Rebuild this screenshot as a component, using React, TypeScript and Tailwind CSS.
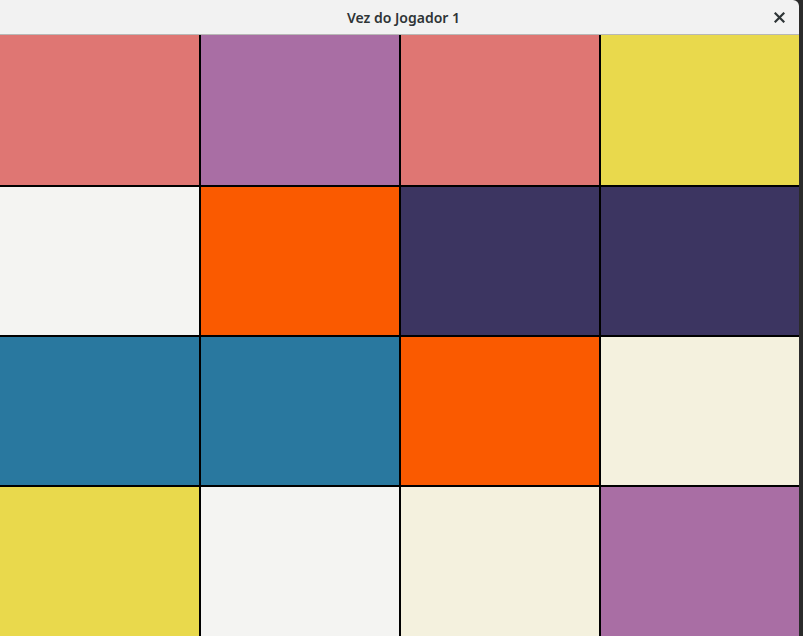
const R = "bg-[#df7673]";
const P = "bg-[#a96ea4]";
const Y = "bg-[#e9d94c]";
const W = "bg-[#f4f4f2]";
const O = "bg-[#fa5a00]";
const N = "bg-[#3c3561]";
const T = "bg-[#29789f]";
const C = "bg-[#f4f1de]";

const board = [
  [R, P, R, Y],
  [W, O, N, N],
  [T, T, O, C],
  [Y, W, C, P],
];

export default function App() {
  return (
    <div className="flex h-[636px] w-[803px] bg-[#2b2b2b]" style={{ fontFamily: '"Noto Sans", "Open Sans", sans-serif' }}>
      <div className="flex w-[799px] flex-col overflow-hidden rounded-tr-[6px] bg-black">
        <div className="relative flex h-[35px] shrink-0 items-center justify-center border-b border-[#b8b8b6] bg-[#f2f2f2]">
          <span className="pl-[8px] text-[14px] font-semibold text-[#2e3436]">Vez do Jogador 1</span>
          <svg className="absolute right-[14px] top-[12px]" width="11" height="11" viewBox="0 0 11 11">
            <path d="M1.5 1.5 L9.5 9.5 M9.5 1.5 L1.5 9.5" stroke="#2e3436" strokeWidth="2.2" strokeLinecap="square" />
          </svg>
        </div>
        <div className="grid flex-1 grid-cols-[199px_198px_198px_198px] grid-rows-[150px_148px_148px_149px] gap-[2px] bg-black">
          {board.flat().map((c, i) => (
            <div key={i} className={c} />
          ))}
        </div>
      </div>
    </div>
  );
}
